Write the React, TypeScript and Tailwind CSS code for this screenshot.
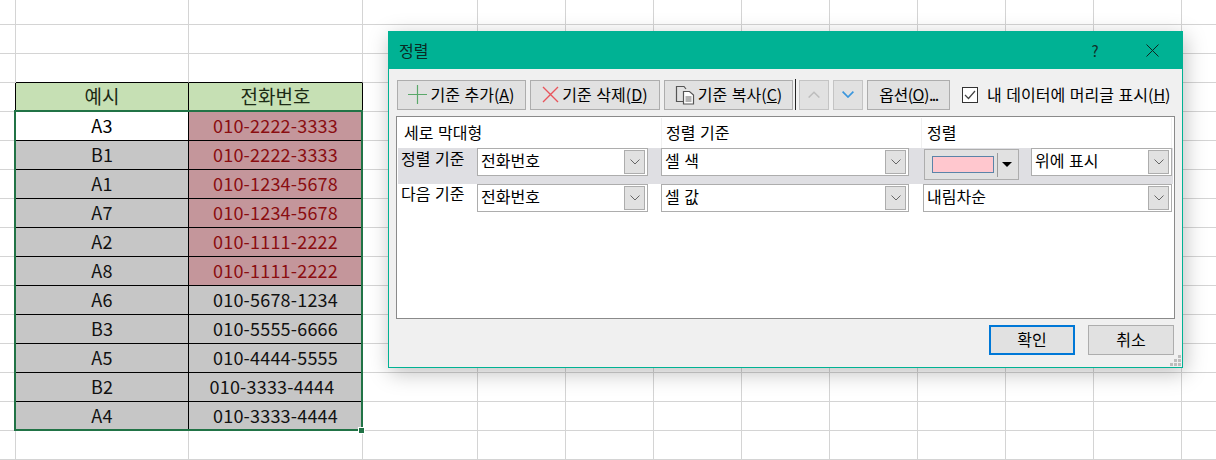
import React from "react";

const cols = [16, 173, 174, 115, 88, 88, 88, 88, 88, 88, 88, 88, 35];
const rowCount = 17;
const font = { fontFamily: '"Noto Sans CJK KR", "Noto Sans", sans-serif' };

const data = [
  ["A3", "010-2222-3333"],
  ["B1", "010-2222-3333"],
  ["A1", "010-1234-5678"],
  ["A7", "010-1234-5678"],
  ["A2", "010-1111-2222"],
  ["A8", "010-1111-2222"],
  ["A6", "010-5678-1234"],
  ["B3", "010-5555-6666"],
  ["A5", "010-4444-5555"],
  ["B2", "010-3333-4444"],
  ["A4", "010-3333-4444"],
];

function Cell({ r, c }: { r: number; c: number }) {
  const inCols = c === 1 || c === 2;
  const isHeader = r === 3 && inCols;
  const isData = r >= 4 && r <= 14 && inCols;
  const aboveTable = r === 2 && inCols;
  const leftOfTable = c === 0 && r >= 3 && r <= 14;
  const base = "flex items-center justify-center border-r border-b pb-[3px] leading-none";
  if (isHeader) {
    return (
      <div className={`${base} border-black bg-[#c6e0b4] text-[#1c2a14] text-[19px]`}>
        {c === 1 ? "예시" : "전화번호"}
      </div>
    );
  }
  if (isData) {
    const i = r - 4;
    const pink = c === 2 && i < 6;
    const white = i === 0 && c === 1;
    const shift = i === 9 && c === 2;
    return (
      <div
        className={`${base} text-[18px] tracking-[0.2px] border-black ${pink ? "bg-[#c4969b] text-[#8a0d10]" : white ? "bg-white text-black" : "bg-[#c6c6c6] text-[#111]"} ${shift ? "pr-[7px]" : ""}`}
      >
        {data[i][c - 1]}
      </div>
    );
  }
  if (aboveTable) return <div className="border-r border-b border-r-[#d4d4d4] border-b-black" />;
  if (leftOfTable) return <div className="border-r border-b border-r-black border-b-[#d4d4d4]" />;
  return <div className="border-r border-b border-[#d4d4d4]" />;
}

function Chevron({ up, color = "#555", w = 10, sw = 1 }: { up?: boolean; color?: string; w?: number; sw?: number }) {
  return (
    <svg width={w} height={w * 0.6} viewBox="0 0 10 6" fill="none">
      <path d={up ? "M0.5 5.5 L5 1 L9.5 5.5" : "M0.5 0.5 L5 5 L9.5 0.5"} stroke={color} strokeWidth={sw} />
    </svg>
  );
}

function Combo({ w, text }: { w: string; text: string }) {
  return (
    <div className={`${w} h-[28px] shrink-0 flex items-center justify-between bg-white border border-[#adadad] pl-[3px] pr-[2px] text-[16px] leading-none text-black`}>
      <span className="pb-[4px]">{text}</span>
      <span className="w-[21px] h-[24px] flex items-center justify-center bg-[#e1e1e1] border border-[#adadad]">
        <Chevron color="#666" />
      </span>
    </div>
  );
}

function ToolButton({ w, icon, label, u, rest }: { w: string; icon: React.ReactNode; label: string; u: string; rest?: string }) {
  return (
    <div className={`${w} h-[30px] shrink-0 flex items-center justify-center gap-[3px] bg-[#e1e1e1] border border-[#adadad] text-[16px] leading-none text-black`}>
      {icon}
      <span className="whitespace-nowrap pb-[2px]">
        {label}(<span className="underline">{u}</span>){rest}
      </span>
    </div>
  );
}

function Dialog() {
  return (
    <div
      className="absolute left-[388px] top-[31px] w-[795px] h-[337px] flex flex-col bg-[#f0f0f0] border border-[#00b294] shadow-[2px_5px_20px_rgba(0,0,0,0.25)] [word-spacing:1px]"
      style={font}
    >
      <div className="h-[37px] shrink-0 flex items-center justify-between bg-[#00b294] pl-[10px] text-[16px] leading-none text-[#0a2a24]">
        <span className="pb-[2px]">정렬</span>
        <div className="flex items-center">
          <span className="w-[54px] text-center text-[15px] text-[#10302a]">?</span>
          <span className="w-[60px] flex justify-center">
            <svg width="13" height="13" viewBox="0 0 13 13" fill="none">
              <path d="M0.5 0.5 L12.5 12.5 M12.5 0.5 L0.5 12.5" stroke="#10241f" strokeWidth="1" />
            </svg>
          </span>
        </div>
      </div>

      <div className="h-[47px] shrink-0 flex items-center pl-[8px] pt-[4px]">
        <div className="flex items-center gap-[4px]">
          <ToolButton
            w="w-[129px]"
            label="기준 추가"
            u="A"
            icon={
              <svg width="19" height="19" viewBox="0 0 19 19" fill="none">
                <path d="M9.5 0 V19 M0 9.5 H19" stroke="#5aa86a" strokeWidth="1.2" />
              </svg>
            }
          />
          <ToolButton
            w="w-[130px]"
            label="기준 삭제"
            u="D"
            icon={
              <svg width="17" height="17" viewBox="0 0 17 17" fill="none">
                <path d="M1 1 L16 16 M16 1 L1 16" stroke="#e8555c" strokeWidth="1.4" />
              </svg>
            }
          />
          <ToolButton
            w="w-[129px]"
            label="기준 복사"
            u="C"
            icon={
              <svg width="20" height="20" viewBox="0 0 20 20" fill="none">
                <path d="M8 16.5 H1.5 V1.5 H9 L11 4" stroke="#555" strokeWidth="1.2" />
                <path d="M8.5 6.5 H14.5 L18.5 10 V19 H8.5 Z" fill="#fff" stroke="#555" strokeWidth="1.2" />
                <path d="M10.5 12 H16.5 M10.5 14 H16.5 M10.5 16 H16.5" stroke="#666" strokeWidth="1" />
              </svg>
            }
          />
        </div>
        <div className="w-px h-[31px] bg-[#222] ml-[2px] mr-[3px]" />
        <div className="flex items-center gap-[4px]">
          <div className="w-[30px] h-[30px] flex items-center justify-center bg-[#e1e1e1] border border-[#c4c4c4]">
            <Chevron up color="#bdbdbd" w={12} sw={1.2} />
          </div>
          <div className="w-[30px] h-[30px] flex items-center justify-center bg-[#e1e1e1] border border-[#c4c4c4]">
            <Chevron color="#3a96dd" w={12} sw={1.4} />
          </div>
          <div className="w-[83px] h-[30px] flex items-center justify-center bg-[#e1e1e1] border border-[#adadad] text-[16px] leading-none text-black whitespace-nowrap">
            <span className="pb-[2px] tracking-[-0.5px]">
              옵션(<span className="underline">O</span>)<span className="tracking-[-1.5px]">...</span>
            </span>
          </div>
        </div>
        <div className="ml-[12px] w-[16px] h-[16px] flex items-center justify-center bg-white border border-[#333]">
          <svg width="12" height="10" viewBox="0 0 12 10" fill="none">
            <path d="M1 5 L4.5 8.5 L11 1" stroke="#444" strokeWidth="1.2" />
          </svg>
        </div>
        <span className="ml-[9px] pb-[2px] text-[16px] leading-none text-black whitespace-nowrap">
          내 데이터에 머리글 표시(<span className="underline">H</span>)
        </span>
      </div>

      <div className="mx-[7px] h-[203px] shrink-0 bg-white border border-[#8a8a8a] p-px text-[16px] leading-none text-black">
        <div className="h-[30px] grid grid-cols-[263px_260px_251px] items-center">
          <span className="pl-[6px] pb-[2px]">세로 막대형</span>
          <span className="h-full flex items-center pl-[4px] pb-[2px] border-l border-[#f0f0f0]">정렬 기준</span>
          <span className="h-full flex items-center pl-[5px] pb-[2px] border-l border-[#f0f0f0] border-r">정렬</span>
        </div>
        <div className="h-[36px] flex items-start bg-[#dfdfe3]">
          <span className="w-[79px] pl-[3px] pt-[2px] whitespace-nowrap">정렬 기준</span>
          <Combo w="w-[171px]" text="전화번호" />
          <div className="w-[13px] shrink-0" />
          <Combo w="w-[248px]" text="셀 색" />
          <div className="w-[15px] shrink-0" />
          <div className="w-[95px] h-[31px] mt-px shrink-0 flex items-center bg-[#e1e1e1] border border-[#adadad] pl-[7px]">
            <span className="w-[62px] h-[17px] bg-[#ffc7ce] border border-[#5b84a8]" />
            <span className="w-px h-[24px] bg-[#9a9a9a] ml-[3px]" />
            <svg width="10" height="5" viewBox="0 0 10 5" className="ml-[4px]">
              <path d="M0 0 H10 L5 5 Z" fill="#000" />
            </svg>
          </div>
          <div className="w-[12px] shrink-0" />
          <Combo w="w-[141px]" text="위에 표시" />
        </div>
        <div className="h-[30px] flex items-start">
          <span className="w-[79px] pl-[3px] pt-px whitespace-nowrap">다음 기준</span>
          <Combo w="w-[171px]" text="전화번호" />
          <div className="w-[13px] shrink-0" />
          <Combo w="w-[248px]" text="셀 값" />
          <div className="w-[14px] shrink-0" />
          <Combo w="w-[249px]" text="내림차순" />
        </div>
      </div>

      <div className="relative flex-1 flex items-start justify-end gap-[13px] pt-[6px] pr-[8px]">
        <div className="w-[86px] h-[30px] flex items-center justify-center bg-[#e1e1e1] border-2 border-[#0078d7] text-[16px] leading-none text-black">
          <span className="pb-[2px]">확인</span>
        </div>
        <div className="w-[86px] h-[30px] flex items-center justify-center bg-[#e1e1e1] border border-[#adadad] text-[16px] leading-none text-black">
          <span className="pb-[2px]">취소</span>
        </div>
        <svg width="11" height="11" viewBox="0 0 11 11" className="absolute right-[1px] bottom-[1px]" fill="#bdbdbd">
          <rect x="8" y="0" width="3" height="3" />
          <rect x="4" y="4" width="3" height="3" />
          <rect x="8" y="4" width="3" height="3" />
          <rect x="0" y="8" width="3" height="3" />
          <rect x="4" y="8" width="3" height="3" />
          <rect x="8" y="8" width="3" height="3" />
        </svg>
      </div>
    </div>
  );
}

export default function App() {
  const template = cols.map((c) => `${c}px`).join(" ");
  return (
    <div className="relative w-[1216px] h-[460px] overflow-hidden bg-white" style={font}>
      <div
        className="grid"
        style={{ gridTemplateColumns: template, gridTemplateRows: `25px repeat(${rowCount - 1}, 29px)` }}
      >
        {Array.from({ length: rowCount }).flatMap((_, r) =>
          cols.map((_, c) => <Cell key={`${r}-${c}`} r={r} c={c} />)
        )}
      </div>
      <div className="absolute left-[14px] top-[110px] w-[349px] h-[321px] border-2 border-[#217346] pointer-events-none" />
      <div className="absolute left-[358px] top-[427px] w-[7px] h-[7px] bg-[#217346] border border-white" />
      <Dialog />
    </div>
  );
}
